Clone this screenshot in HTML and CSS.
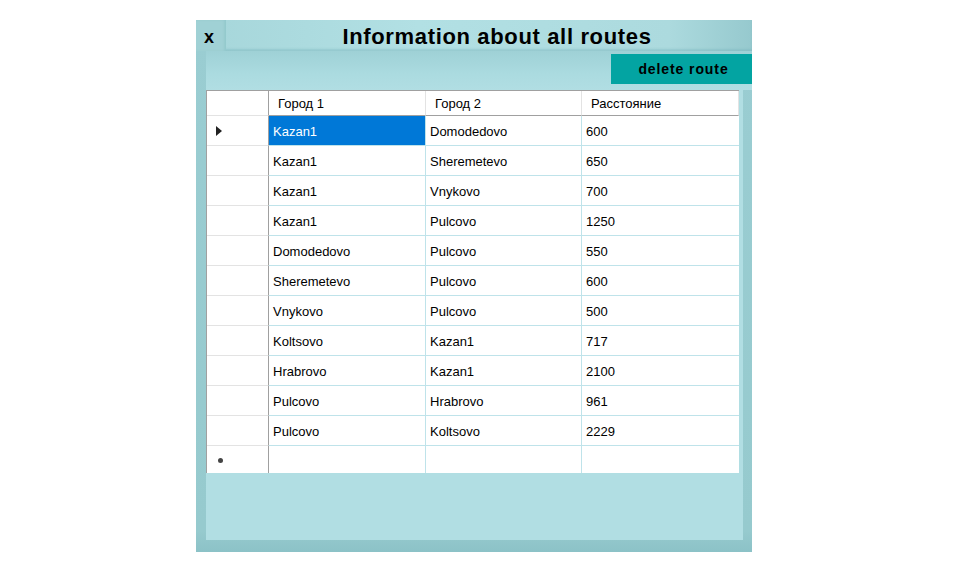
FILE: index.html
```html
<!DOCTYPE html>
<html>
<head>
<meta charset="utf-8">
<link rel="stylesheet" href="styles.css">
</head>
<body>
<div class="window">
  <div class="titlebar">
    <div class="close">x</div>
    <div class="title">Information about all routes</div>
  </div>
  <div class="frame">
    <div class="toolbar">
      <button class="delete">delete route</button>
    </div>
    <div class="grid">
      <div class="rh"></div><div class="h">Город 1</div><div class="h">Город 2</div><div class="h">Расстояние</div>

      <div class="rh"><svg width="6" height="10" viewBox="0 0 6 10"><polygon points="0,0 6,5 0,10" fill="#222"/></svg></div><div class="c sel">Kazan1</div><div class="c">Domodedovo</div><div class="c">600</div>
      <div class="rh"></div><div class="c">Kazan1</div><div class="c">Sheremetevo</div><div class="c">650</div>
      <div class="rh"></div><div class="c">Kazan1</div><div class="c">Vnykovo</div><div class="c">700</div>
      <div class="rh"></div><div class="c">Kazan1</div><div class="c">Pulcovo</div><div class="c">1250</div>
      <div class="rh"></div><div class="c">Domodedovo</div><div class="c">Pulcovo</div><div class="c">550</div>
      <div class="rh"></div><div class="c">Sheremetevo</div><div class="c">Pulcovo</div><div class="c">600</div>
      <div class="rh"></div><div class="c">Vnykovo</div><div class="c">Pulcovo</div><div class="c">500</div>
      <div class="rh"></div><div class="c">Koltsovo</div><div class="c">Kazan1</div><div class="c">717</div>
      <div class="rh"></div><div class="c">Hrabrovo</div><div class="c">Kazan1</div><div class="c">2100</div>
      <div class="rh"></div><div class="c">Pulcovo</div><div class="c">Hrabrovo</div><div class="c">961</div>
      <div class="rh"></div><div class="c">Pulcovo</div><div class="c">Koltsovo</div><div class="c">2229</div>
      <div class="rh last"><span class="star"></span></div><div class="c last"></div><div class="c last"></div><div class="c last"></div>
    </div>
  </div>
</div>
</body>
</html>
```

FILE: styles.css
```css
html, body {
  margin: 0;
  padding: 0;
  background: #ffffff;
}
body {
  padding: 20px 0 0 196px;
  font-family: "Liberation Sans", Arial, sans-serif;
}
.window {
  width: 556px;
  height: 532px;
  display: flex;
  flex-direction: column;
  background: linear-gradient(to bottom, #9acdd2 0%, #96cace 96%, #8cc2c7 100%);
}
.titlebar {
  height: 31px;
  display: flex;
  background: linear-gradient(to right, #a6d6da 0%, #b2e0e4 40%, #acdade 85%, #96c9ce 100%);
  box-shadow: inset 0 -2px 2px rgba(120, 180, 186, 0.45);
}
.close {
  width: 30px;
  background: #a0d1d5;
  box-shadow: inset -2px 0 2px rgba(140, 196, 200, 0.6);
  font-weight: bold;
  font-size: 18px;
  line-height: 35px;
  padding-left: 8px;
  box-sizing: border-box;
  color: #000;
}
.title {
  flex: 1;
  text-align: center;
  font-weight: bold;
  font-size: 22px;
  letter-spacing: 0.65px;
  line-height: 33px;
  color: #000;
  padding-left: 16px;
}
.frame {
  flex: 1;
  margin: 0 9px 12px 10px;
  background: #b1dee3;
  display: flex;
  flex-direction: column;
}
.toolbar {
  height: 39px;
  margin-right: -9px;
  display: flex;
  justify-content: flex-end;
  align-items: flex-start;
  padding-top: 3px;
  box-sizing: border-box;
  background: linear-gradient(to bottom, #9fd1d6 0%, #abdbe0 60%, #b1dee3 100%);
}
.delete {
  width: 141px;
  height: 30px;
  border: none;
  background: #03a4a2;
  color: #000;
  font-family: "Liberation Sans", Arial, sans-serif;
  font-weight: bold;
  font-size: 14px;
  letter-spacing: 0.9px;
  padding: 0 0 0 4px;
}
.grid {
  width: 533px;
  box-sizing: border-box;
  border-left: 1px solid #a0a0a0;
  border-top: 1px solid #a0a0a0;
  display: grid;
  grid-template-columns: 62px 157px 156px 157px;
  grid-template-rows: 25px repeat(11, 30px) 27px;
  background: #ffffff;
  font-size: 13px;
  color: #000;
}
.grid > div {
  box-sizing: border-box;
  display: flex;
  align-items: center;
  white-space: nowrap;
}
.h {
  border-right: 1px solid #e3e3e3;
  border-bottom: 1px solid #a0a0a0;
  padding-left: 9px;
}
.h:last-child {
  border-right: none;
}
.rh {
  border-right: 1px solid #a0a0a0;
  border-bottom: 1px solid #e3e3e3;
  padding-left: 9px;
}
.c {
  border-right: 1px solid #bfe3ea;
  border-bottom: 1px solid #bfe3ea;
  padding-left: 4px;
  padding-top: 1px;
}
.c:nth-child(4n) {
  border-right: none;
}
.last {
  border-bottom: none !important;
}
.sel {
  background: #0078d7;
  color: #ffffff;
}
.star {
  display: block;
  width: 5px;
  height: 5px;
  margin-left: 2px;
  margin-top: 2px;
  border-radius: 50%;
  background: #444;
}
```
